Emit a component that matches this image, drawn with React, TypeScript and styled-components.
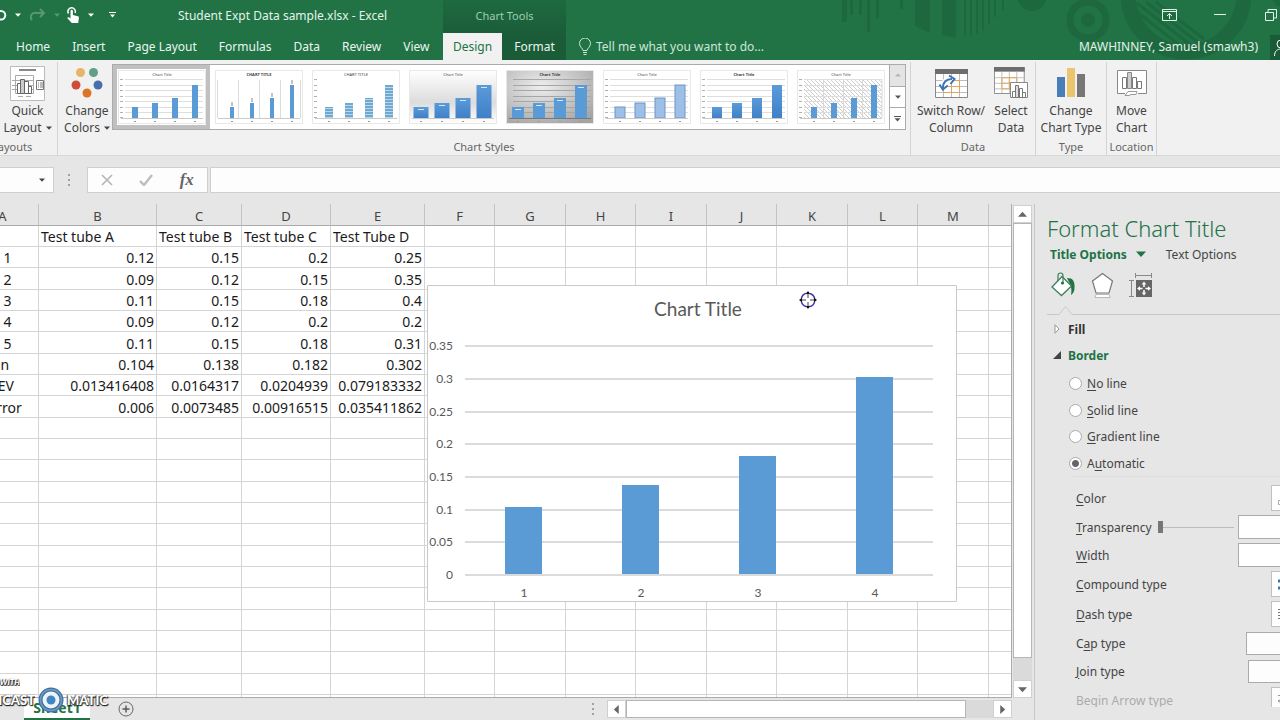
import React from "react";
import styled, { createGlobalStyle, css } from "styled-components";

const ui = `"Noto Sans", "Open Sans", "Liberation Sans", sans-serif`;
const sheetFont = `"Noto Sans", Lato, "Liberation Sans", sans-serif`;
const green = "#217346";
const darkGreen = "#1a5c38";
const artGreen = "#1d683e";

const Global = createGlobalStyle`
  * { box-sizing: border-box; }
  body { margin: 0; overflow: hidden; background: #e6e6e6; font-family: ${ui}; font-size: 12px; color: #444; }
  button, input, select { font: inherit; color: inherit; margin: 0; }
  button { border: 0; padding: 0; background: none; }
  u { text-underline-offset: 2px; }
  svg { display: block; flex: none; }
`;

const Window = styled.div`
  display: flex;
  flex-direction: column;
  height: 100vh;
  overflow: hidden;
`;

/* Title bar and tabs */
const Header = styled.header`
  position: relative;
  display: flex;
  flex: none;
  background: ${green};
  color: #e4f3ea;
  white-space: nowrap;
  overflow: hidden;
`;
const HeaderArt = styled.svg`
  position: absolute;
  top: 0;
  right: 0;
`;
const HeaderPart = styled.div<{ $width?: number; $dark?: boolean }>`
  position: relative;
  display: flex;
  flex-direction: column;
  ${(p) => (p.$width ? css`flex: none; width: ${p.$width}px;` : css`flex: 1; min-width: 0;`)}
  ${(p) => p.$dark && css`background: linear-gradient(#1e6a40, ${darkGreen} 60%);`}
`;
const TitleRow = styled.div<{ $end?: boolean; $center?: boolean }>`
  display: flex;
  align-items: center;
  height: 33px;
  padding-bottom: 3px;
  justify-content: ${(p) => (p.$end ? "flex-end" : p.$center ? "center" : "flex-start")};
  margin-right: ${(p) => (p.$end ? -7 : 0)}px;
`;
const QuickAccess = styled.div`
  display: flex;
  align-items: center;
  width: 178px;
  height: 30px;
`;
const QuickButton = styled.button<{ $width: number; $faded?: boolean }>`
  display: flex;
  justify-content: center;
  flex: none;
  width: ${(p) => p.$width}px;
  overflow: hidden;
  color: #fff;
  opacity: ${(p) => (p.$faded ? 0.25 : 1)};
`;
const DocTitle = styled.span`
  font-size: 12px;
`;
const ContextLabel = styled.span`
  font-size: 11px;
  color: #9dceb1;
`;
const TabRow = styled.div<{ $gap?: number; $pad?: number }>`
  display: flex;
  align-items: stretch;
  height: 27px;
  gap: ${(p) => p.$gap ?? 0}px;
  padding-left: ${(p) => p.$pad ?? 0}px;
`;
const Tab = styled.button<{ $active?: boolean; $pad?: number }>`
  padding: 0 ${(p) => p.$pad ?? 0}px;
  font-size: 12px;
  color: ${(p) => (p.$active ? green : "#e9f6ee")};
  background: ${(p) => (p.$active ? "#f1f1f1" : "transparent")};
`;
const TellMe = styled.button`
  display: flex;
  align-items: center;
  gap: 5px;
  color: #cde6d7;
`;
const Account = styled.span`
  display: flex;
  align-items: center;
  margin-left: auto;
`;
const ShareButton = styled.button`
  display: flex;
  align-items: center;
  flex: none;
  width: 10px;
  height: 25px;
  margin: 2px 0 0 12px;
  padding-left: 4px;
  overflow: hidden;
  color: #fff;
  background: #185c37;
`;
const WindowButton = styled.button<{ $width: number }>`
  display: flex;
  align-items: center;
  flex: none;
  justify-content: center;
  width: ${(p) => p.$width}px;
  height: 28px;
  color: #e4f3ea;
`;

/* Ribbon */
const Ribbon = styled.section`
  display: flex;
  flex: none;
  height: 96px;
  padding-top: 2px;
  background: #f1f1f1;
  border-bottom: 1px solid #d8d8d8;
  overflow: hidden;
`;
const Group = styled.div<{ $width?: number; $shift?: number }>`
  display: flex;
  flex-direction: column;
  justify-content: space-between;
  flex: none;
  height: 93px;
  ${(p) => p.$width && css`width: ${p.$width}px;`}
  margin-left: ${(p) => p.$shift ?? 0}px;
  border-right: 1px solid #d4d4d4;
`;
const GroupItems = styled.div`
  display: flex;
  justify-content: center;
  padding-top: 2px;
`;
const GroupLabel = styled.div`
  font-size: 11px;
  line-height: 16px;
  text-align: center;
  color: #666;
  white-space: nowrap;
`;
const BigButton = styled.button<{ $width: number }>`
  display: flex;
  flex-direction: column;
  align-items: center;
  flex: none;
  width: ${(p) => p.$width}px;
  white-space: nowrap;
  font-size: 12px;
  line-height: 17px;
`;
const IconBox = styled.span`
  display: flex;
  align-items: center;
  justify-content: center;
  height: 38px;
`;
const WithArrow = styled.span`
  display: flex;
  align-items: center;
  gap: 4px;
`;
const Gallery = styled.div`
  display: flex;
  height: 66px;
  border: 1px solid #ababab;
  background: #fff;
`;
const StyleButton = styled.button<{ $selected?: boolean }>`
  flex: none;
  width: 97px;
  height: 64px;
  border: 4px solid ${(p) => (p.$selected ? "#c0c0c0" : "transparent")};
  display: flex;
  align-items: center;
  justify-content: center;
`;
const GallerySteps = styled.div`
  display: flex;
  flex-direction: column;
  width: 16px;
  border-left: 1px solid #ababab;
`;
const GalleryStep = styled.button<{ $off?: boolean }>`
  display: flex;
  align-items: center;
  justify-content: center;
  flex: 1;
  color: ${(p) => (p.$off ? "#b5b5b5" : "#555")};
  background: ${(p) => (p.$off ? "#e4e4e4" : "#fff")};
  & + & { border-top: 1px solid #ababab; }
`;

/* Formula bar */
const FormulaBar = styled.section`
  display: flex;
  flex: none;
  align-items: center;
  height: 48px;
`;
const NameBox = styled.div`
  display: flex;
  align-items: center;
  width: 54px;
  height: 26px;
  border: 1px solid #cfcfcf;
  border-left: 0;
  background: #fdfdfd;
`;
const NameInput = styled.input`
  width: 39px;
  border: 0;
  background: transparent;
`;
const Grip = styled.span<{ $margin: string }>`
  display: flex;
  flex-direction: column;
  gap: 3px;
  flex: none;
  margin: ${(p) => p.$margin};
  i { width: 2px; height: 2px; background: #a0a0a0; }
`;
const FormulaTools = styled.div`
  display: flex;
  align-items: center;
  justify-content: space-around;
  width: 121px;
  height: 26px;
  border: 1px solid #cfcfcf;
  background: #fdfdfd;
`;
const FormulaInput = styled.input`
  flex: 1;
  min-width: 0;
  height: 26px;
  margin-left: 2px;
  border: 1px solid #cfcfcf;
  border-right: 0;
  background: #fdfdfd;
`;
const Fx = styled.span`
  font: italic 700 17px "Liberation Serif", serif;
  color: #666;
`;

/* Worksheet */
const Body = styled.main`
  display: flex;
  flex: 1;
  min-height: 0;
`;
const Workbook = styled.section`
  display: flex;
  flex-direction: column;
  flex: 1;
  min-width: 0;
`;
const SheetRow = styled.div`
  display: flex;
  flex: 1;
  min-height: 0;
`;
const SheetView = styled.div`
  position: relative;
  flex: 1;
  min-width: 0;
  overflow: hidden;
  border-right: 1px solid #ababab;
  border-bottom: 1px solid #ababab;
  background: #fff;
`;
const Grid = styled.table`
  table-layout: fixed;
  width: calc(100% + 33px);
  margin-left: -33px;
  border-collapse: separate;
  border-spacing: 0;
  font-family: ${sheetFont};
  font-size: 14px;
  line-height: 18px;
  color: #1a1a1a;
  th, td { padding: 2px 2px 0; white-space: nowrap; border-right: 1px solid #d4d4d4; border-bottom: 1px solid #d4d4d4; }
  th { height: 22px; font-size: 13px; font-weight: 400; color: #444; background: #e6e6e6; border-right-color: #c3c3c3; border-bottom-color: #ababab; }
  td { height: 21px; }
  tr:nth-child(3n) td { height: 22px; }
  td:first-child { padding-left: 5px; }
  th:last-child, td:last-child { border-right: 0; }
`;
const Cell = styled.td<{ $right?: boolean }>`
  text-align: ${(p) => (p.$right ? "right" : "left")};
`;
const ChartFrame = styled.svg`
  position: absolute;
  left: 427px;
  top: 81px;
`;
const MoveCursor = styled.svg`
  position: absolute;
  left: 799px;
  top: 87px;
`;
const ScrollButton = styled.button`
  display: flex;
  align-items: center;
  justify-content: center;
  flex: none;
  width: 19px;
  height: 18px;
  color: #666;
  background: #fff;
  border: 1px solid #d0d0d0;
`;
const VScroll = styled.div`
  display: flex;
  flex-direction: column;
  flex: none;
  width: 19px;
  margin: 1px 2px 0 1px;
  background: #dadada;
`;
const VThumb = styled.div`
  flex: 1;
  margin-bottom: 22px;
  background: #fff;
  border: 1px solid #b5b5b5;
`;
const BottomBar = styled.div`
  position: relative;
  display: flex;
  align-items: center;
  flex: none;
  height: 22px;
`;
const SheetTab = styled.button`
  align-self: stretch;
  width: 66px;
  margin-left: 24px;
  font-size: 14px;
  line-height: 18px;
  font-weight: 700;
  color: ${green};
  background: #fff;
  border-bottom: 2px solid ${green};
`;
const AddSheet = styled.button`
  margin-left: 28px;
`;
const HScroll = styled.div`
  display: flex;
  flex: none;
  width: 405px;
  height: 18px;
  margin-right: 22px;
  background: #dadada;
`;
const HThumb = styled.div`
  width: 340px;
  margin-right: auto;
  background: #fff;
  border: 1px solid #b5b5b5;
`;
const Watermark = styled.div`
  position: absolute;
  left: 0;
  bottom: 7px;
  font-family: Lato, sans-serif;
  font-weight: 900;
  color: #fff;
  text-shadow: 1px 1px 1px #222, -1px 0 1px #555, 0 1px 1px #333;
  pointer-events: none;
`;
const WatermarkTop = styled.div`
  display: flex;
  justify-content: flex-end;
  width: 20px;
  overflow: hidden;
  font-size: 8px;
  line-height: 8px;
  font-style: italic;
  white-space: nowrap;
`;
const WatermarkName = styled.div`
  display: flex;
  align-items: center;
  gap: 3px;
  height: 27px;
  font-size: 13px;
  line-height: 14px;
`;
const WatermarkCut = styled.span`
  display: flex;
  justify-content: flex-end;
  width: 35px;
  overflow: hidden;
`;

/* Format pane */
const Pane = styled.aside`
  flex: none;
  width: 246px;
  padding-bottom: 13px;
  overflow: hidden;
  border-left: 1px solid #c6c6c6;
`;
const PaneInner = styled.div`
  width: 286px;
  height: 100%;
  padding-left: 12px;
  overflow: hidden;
`;
const PaneTitle = styled.h2`
  margin: 0;
  padding-top: 9px;
  font-size: 22px;
  line-height: 30px;
  font-weight: 300;
  color: ${green};
`;
const PaneTabs = styled.div`
  display: flex;
  align-items: center;
  height: 22px;
  padding-left: 3px;
`;
const PaneTab = styled.button<{ $active?: boolean }>`
  display: flex;
  align-items: center;
  gap: 9px;
  margin-right: 20px;
  font-size: 12px;
  font-weight: ${(p) => (p.$active ? 700 : 400)};
  color: ${(p) => (p.$active ? green : "#444")};
`;
const PaneIcons = styled.div`
  display: flex;
  align-items: center;
  gap: 14px;
  height: 40px;
  padding-left: 4px;
`;
const PaneRule = styled.svg`
  margin-bottom: 1px;
`;
const SectionButton = styled.button<{ $open?: boolean }>`
  display: flex;
  align-items: center;
  gap: 6px;
  height: 26px;
  padding-left: 5px;
  font-weight: 700;
  color: ${(p) => (p.$open ? green : "#333")};
`;
const Radios = styled.div`
  display: flex;
  flex-direction: column;
  margin-top: 2px;
  padding-left: 22px;
`;
const RadioLabel = styled.label`
  display: flex;
  align-items: center;
  gap: 5px;
  height: 27px;
  &:nth-child(2n) { height: 26px; }
`;
const Radio = styled.input`
  appearance: none;
  width: 13px;
  height: 13px;
  border: 1px solid #ababab;
  border-radius: 50%;
  background: #fff;
  &:checked { background: radial-gradient(circle, #666 0 3px, #fff 4px); }
`;
const Fields = styled.div`
  display: flex;
  flex-direction: column;
  gap: 4px;
  margin-left: 26px;
  padding-top: 8px;
  border-top: 1px solid #dedede;
`;
const Field = styled.div<{ $tall?: boolean; $off?: boolean }>`
  display: flex;
  flex: none;
  align-items: center;
  justify-content: space-between;
  height: ${(p) => (p.$tall ? 26 : 24)}px;
  padding-left: 3px;
  ${(p) => p.$off && css`color: #ababab;`}
`;
const Swatch = styled.button`
  display: flex;
  align-items: center;
  width: 50px;
  height: 26px;
  padding-left: 6px;
  background: #fff;
  border: 1px solid #c0c0c0;
`;
const Entry = styled.input`
  width: 83px;
  height: 24px;
  background: #fff;
  border: 1px solid #ababab;
`;
const Picker = styled.select<{ $width: number }>`
  width: ${(p) => p.$width}px;
  height: 23px;
  background: #fdfdfd;
  border: 1px solid #ababab;
  border-radius: 0;
  appearance: none;
`;
const Slider = styled.input`
  appearance: none;
  width: 76px;
  height: 12px;
  margin: 0 auto 0 6px;
  background: linear-gradient(#bcbcbc, #bcbcbc) center / 100% 1px no-repeat;
  &::-webkit-slider-thumb { appearance: none; width: 5px; height: 12px; background: #777; }
`;

const Arrow = ({ dir = "down", size = 6 }: { dir?: string; size?: number }) => {
  const turn = { down: 0, left: 90, up: 180, right: 270 }[dir] ?? 0;
  return (
    <svg width={size} height={size} viewBox="0 0 6 6" aria-hidden>
      <path d="M0 1.5h6L3 4.8z" fill="currentColor" transform={`rotate(${turn} 3 3)`} />
    </svg>
  );
};

const GridTable = () => (
  <>
    <path d="M.5.5h32v28h-32z" fill="#fff" stroke="#888" />
    <path d="M0 0h33v5H0z" fill="#6d6d6d" />
    <path d="M8.500 5v23M16.500 5v23M24.500 5v23M1 11.500h31M1 17.500h31M1 23.500h31" stroke="#bdbdbd" />
    <path d="M8.500 11.500h16v12h-16zM16.500 11.500v12M8.500 17.500h16" fill="none" stroke="#e5a35a" />
  </>
);

const SwitchIcon = () => (
  <svg width="33" height="29" viewBox="0 0 33 29">
    <GridTable />
    <path d="M8 19c0-6 3-9 9-9" fill="none" stroke="#fff" strokeWidth="5" />
    <path d="M8 19c0-6 3-9 9-9" fill="none" stroke="#3f74b3" strokeWidth="2" />
    <path d="M14 6.500l5.500 3.500-4 5M4.500 15.500l3.300 5 5-4" fill="none" stroke="#3f74b3" strokeWidth="2" />
  </svg>
);
const SelectIcon = () => (
  <svg width="34" height="32" viewBox="0 0 34 32">
    <g transform="scale(.93)"><GridTable /></g>
    <path d="M16.500 15.500h17v15h-17z" fill="#fff" stroke="#888" />
    <path d="M18.500 24.500h3v6h-3zM25.500 21.500h3v9h-3zM28.500 25.500h3v5h-3z" fill="#fff" stroke="#777" />
    <path d="M21.500 18.500h3v12h-3z" fill="#ddd" stroke="#777" />
  </svg>
);
const TypeIcon = () => (
  <svg width="28" height="30" viewBox="0 0 28 30">
    <path d="M0 9h8v20H0z" fill="#4a7ebb" />
    <path d="M10 0h8v29h-8z" fill="#ebc46e" />
    <path d="M20 6h8v23h-8z" fill="#777" />
  </svg>
);
const MoveIcon = () => (
  <svg width="30" height="28" viewBox="0 0 30 28">
    <path d="M8 24.500H.5V1.500h29v23H21" fill="#fff" stroke="#888" />
    <path d="M5.500 8.500h4v11h-4zM15.500 8.500h4v11h-4zM20.500 12.500h4v7h-4z" fill="#fff" stroke="#777" />
    <path d="M10.500 3.500h4v16h-4z" fill="#ccc" stroke="#888" />
    <path d="M8 26.500l3-4h9l-1 3h-5l-2 1z" fill="#fff" stroke="#999" />
  </svg>
);
const LayoutIcon = () => (
  <svg width="35" height="35" viewBox="0 0 35 35">
    <path d="M.5.5h34v34H.5z" fill="#fff" stroke="#bbb" />
    <path d="M9 4h17" stroke="#888" strokeWidth="2" />
    <path d="M5.500 9.500h18v18h-18zM2 14.500h21M2 19.500h21M2 23.500h21M8 30.500h5M16 30.500h5" fill="none" stroke="#aaa" />
    <path d="M7.500 17.500h3v10h-3zM14.500 15.500h4v12h-4zM18.500 20.500h3v7h-3z" fill="#fff" stroke="#666" />
    <path d="M10.500 13.500h4v14h-4z" fill="#ccc" stroke="#666" />
    <path d="M26.500 14.500h7v9h-7zM28 17h1M30 17h3M28 19h1M30 19h3M28 21h1M30 21h3" fill="none" stroke="#777" />
  </svg>
);
const ColorsIcon = () => (
  <svg width="32" height="30" viewBox="0 0 32 30">
    <circle cx="9.500" cy="4.500" r="4.500" fill="#e8b468" />
    <circle cx="22.500" cy="4.500" r="4.500" fill="#629f84" />
    <circle cx="5" cy="17" r="4.500" fill="#cf4d36" />
    <circle cx="27" cy="17" r="4.500" fill="#4770ab" />
    <circle cx="16" cy="25" r="4.500" fill="#dc7426" />
  </svg>
);

type Look = {
  title: string; bold?: boolean; bar: string; w: number; back?: string; lines?: "h" | "v" | "none"; line?: string;
  axis?: boolean; stroke?: string; values?: boolean; selected?: boolean; hatch?: boolean;
};
const looks: Look[] = [
  { title: "Chart Title", bar: "#5b9bd5", w: 6, lines: "h", axis: true, selected: true },
  { title: "CHART TITLE", bold: true, bar: "#5b9bd5", w: 4, lines: "v" },
  { title: "CHART TITLE", bar: "url(#stripes)", w: 8, axis: true, lines: "none" },
  { title: "Chart Title", bar: "url(#blueFade)", w: 15, back: "url(#softGrey)", lines: "none", values: true },
  { title: "Chart Title", bold: true, bar: "#5b9bd5", w: 12, back: "url(#deepGrey)", lines: "h", line: "#a6a6a6", values: true },
  { title: "Chart Title", bar: "#9dbfe8", w: 10, lines: "h", axis: true, stroke: "#6f96c6" },
  { title: "Chart Title", bold: true, bar: "url(#blueFade)", w: 10, lines: "h", axis: true },
  { title: "Chart Title", bar: "#5b9bd5", w: 6, lines: "h", axis: true, hatch: true },
];
const tops = [37, 33, 28, 15];

const Thumb = ({ look }: { look: Look }) => (
  <svg width="88" height="54" viewBox="0 0 88 54">
    <path d="M.5.5h87v53H.5z" fill={look.back ?? "#fff"} stroke="#e8e8e8" />
    <text x="44" y="6" fontSize="4" fontWeight={look.bold ? 700 : 400} textAnchor="middle" fill="#444">{look.title}</text>
    {look.hatch && <path d="M7 9h78v39H7z" fill="url(#hatch)" />}
    {look.hatch && <path d="M26.500 9v39M46.500 9v39M65.500 9v39M85 9v39" stroke="#d8d8d8" />}
    {look.lines === "h" && <path d="M7 9.500h78M7 15.500h78M7 20.500h78M7 26.500h78M7 31.500h78M7 37.500h78M7 42.500h78" stroke={look.line ?? "#dedede"} />}
    {look.lines === "v" && <path d="M2.500 10v38M23.500 10v38M44.500 10v38M65.500 10v38M85.500 10v38" stroke="#dcdcdc" />}
    {look.axis && [10, 16, 21, 27, 32, 38, 43, 48].map((y) => <path key={y} d={`M2 ${y - 0.5}h3`} stroke="#b0b0b0" />)}
    {tops.map((y, i) => {
      const center = look.w > 10 ? 12 + i * 21 : 17 + i * 20;
      return (
        <g key={y}>
          <rect x={center - look.w / 2} y={y} width={look.w} height={48 - y} fill={look.bar} stroke={look.stroke} />
          {look.values && <path d={`M${center - 3} ${y + 2.5}h6`} stroke="#d6e6f5" />}
          {look.lines === "v" && <path d={`M${center} ${y - 5}v4`} stroke="#888" />}
          <path d={`M${center - 1} 51.500h2`} stroke="#999" />
        </g>
      );
    })}
    <path d="M3 48.500h82" stroke={look.line ? "#777" : "#cacaca"} />
  </svg>
);

const Defs = styled.svg`
  position: absolute;
`;
const PatternDefs = () => (
  <Defs width="0" height="0" aria-hidden>
    <defs>
      <linearGradient id="blueFade" x1="0" y1="0" x2="0" y2="1"><stop stopColor="#5b9bd9" /><stop offset="1" stopColor="#3f80c8" /></linearGradient>
      <linearGradient id="softGrey" x1="0" y1="0" x2="0" y2="1"><stop stopColor="#fff" /><stop offset=".6" stopColor="#dcdcdc" /><stop offset="1" stopColor="#fff" /></linearGradient>
      <radialGradient id="deepGrey" cx=".4" cy=".3" r=".8"><stop stopColor="#eee" /><stop offset="1" stopColor="#a4a4a4" /></radialGradient>
      <pattern id="stripes" width="4" height="3" patternUnits="userSpaceOnUse"><path d="M0 0h4v3H0z" fill="#b9d6ea" /><path d="M0 0h4v2H0z" fill="#6fa8d0" /></pattern>
      <pattern id="hatch" width="4" height="4" patternUnits="userSpaceOnUse"><path d="M0 0l4 4" stroke="#c2c2c2" strokeWidth=".8" /></pattern>
    </defs>
  </Defs>
);

const columns: [string, number | undefined][] = [
  ["A", 72], ["B", 118], ["C", 85], ["D", 89], ["E", 94], ["F", 70], ["G", 71], ["H", 70],
  ["I", 71], ["J", 70], ["K", 71], ["L", 70], ["M", 71], ["", undefined],
];
const data = [
  ["", "Test tube A", "Test tube B", "Test tube C", "Test Tube D"],
  ["Trial 1", "0.12", "0.15", "0.2", "0.25"],
  ["Trial 2", "0.09", "0.12", "0.15", "0.35"],
  ["Trial 3", "0.11", "0.15", "0.18", "0.4"],
  ["Trial 4", "0.09", "0.12", "0.2", "0.2"],
  ["Trial 5", "0.11", "0.15", "0.18", "0.31"],
  ["Mean", "0.104", "0.138", "0.182", "0.302"],
  ["STDEV", "0.013416408", "0.0164317", "0.0204939", "0.079183332"],
  ["St Error", "0.006", "0.0073485", "0.00916515", "0.035411862"],
];
const rows = Array.from({ length: 23 }, (_, i) => data[i] ?? []);

const Chart = () => {
  const zero = 290;
  const perUnit = 654;
  return (
    <ChartFrame width="530" height="317" viewBox="0 0 530 317" fontFamily="Lato, sans-serif" fill="#595959" role="img" aria-label="Chart Title">
      <path d="M.5.5h529v316H.5z" fill="#fff" stroke="#c9c9c9" />
      <text x="271" y="31" fontSize="19" textAnchor="middle">Chart Title</text>
      {[0, 0.05, 0.1, 0.15, 0.2, 0.25, 0.3, 0.35].map((v) => {
        const y = Math.round(zero - v * perUnit);
        return (
          <g key={v}>
            <path d={`M38 ${y}h468`} stroke="#cfcfcf" strokeWidth="1.500" />
            <text x="26" y={y + 4} fontSize="12" textAnchor="end">{v}</text>
          </g>
        );
      })}
      {[0.104, 0.138, 0.182, 0.302].map((v, i) => (
        <g key={v}>
          <rect x={78 + i * 117} y={Math.round(zero - v * perUnit)} width="37" height={Math.round(v * perUnit) - 1} fill="#5b9bd5" />
          <text x={97 + i * 117} y="312" fontSize="12" textAnchor="middle">{i + 1}</text>
        </g>
      ))}
    </ChartFrame>
  );
};

const RibbonButton = ({ width, icon, lines, arrow }: { width: number; icon: React.ReactNode; lines: string[]; arrow?: boolean }) => (
  <BigButton $width={width}>
    <IconBox>{icon}</IconBox>
    <span>{lines[0]}</span>
    <WithArrow>{lines[1]}{arrow && <Arrow />}</WithArrow>
  </BigButton>
);

export default function App() {
  return (
    <Window>
      <Global />
      <PatternDefs />
      <Header>
        <HeaderArt width="450" height="60" viewBox="830 0 450 60" fill={artGreen} stroke="none" aria-hidden>
          <path d="M842 0h5v22h-5zM850 0h3v15h-3zM859 0h3v15h-3zM867 0h3v32h-3zM876 0h3v18h-3zM900 0h3v9h-3zM915 0h15v33l-15-7zM942 0h14v38l-14-3z" />
          <path d="M964 0h2v36h-2zM970 0h2v36h-2zM976 0h2v34h-2zM982 0h2v31h-2zM988 0h2v24h-2zM994 0h2v17h-2zM1002 0h2v10h-2z" />
          <circle cx="1032" cy="-4" r="15" />
          <circle cx="1088" cy="20" r="18" fill="none" stroke={artGreen} strokeWidth="7" />
          <circle cx="1088" cy="20" r="7" />
          <circle cx="1186" cy="-6" r="58" fill="none" stroke={artGreen} strokeWidth="15" />
          <path d="M1132 8l46 36M1137 3l56 44M1146 2l54 42M1156 2l48 37" stroke={artGreen} strokeWidth="3" />
          <circle cx="1284" cy="-4" r="12" />
        </HeaderArt>
        <HeaderPart $width={443}>
          <TitleRow>
            <QuickAccess>
              <QuickButton $width={10} aria-label="Undo">
                <svg width="10" height="14" viewBox="0 0 10 14"><path d="M0 3h1a4.300 4.300 0 010 8.600H0" fill="none" stroke="currentColor" strokeWidth="2" /></svg>
              </QuickButton>
              <QuickButton $width={16} aria-label="Undo list"><Arrow /></QuickButton>
              <QuickButton $width={24} $faded aria-label="Redo">
                <svg width="16" height="14" viewBox="0 0 16 14"><path d="M10 1l4 4-4 4M14 5H6a4.200 4.200 0 00-4 7" fill="none" stroke="currentColor" strokeWidth="2" /></svg>
              </QuickButton>
              <QuickButton $width={13} $faded aria-label="Redo list"><Arrow /></QuickButton>
              <QuickButton $width={20} aria-label="Touch mode">
                <svg width="14" height="17" viewBox="0 0 14 17">
                  <path d="M2.500 6.500a3.700 3.700 0 116.500-.5" fill="none" stroke="currentColor" strokeWidth="1.500" />
                  <path d="M4.500 4a1.200 1.200 0 012.400 0v4l5 1.200c.9.300 1.100.8 1 1.600L12.200 16H5.800L1.200 11c.6-1 1.700-.8 3.300.5z" fill="currentColor" />
                </svg>
              </QuickButton>
              <QuickButton $width={16} aria-label="Mode list"><Arrow /></QuickButton>
              <QuickButton $width={26} aria-label="Customize">
                <svg width="7" height="6" viewBox="0 0 7 6"><path d="M0 0h7v1H0zM1 2.500h5L3.500 5.500z" fill="currentColor" /></svg>
              </QuickButton>
            </QuickAccess>
            <DocTitle>Student Expt Data sample.xlsx - Excel</DocTitle>
          </TitleRow>
          <TabRow $gap={22} $pad={16}>
            {["Home", "Insert", "Page Layout", "Formulas", "Data", "Review", "View"].map((t) => <Tab key={t}>{t}</Tab>)}
          </TabRow>
        </HeaderPart>
        <HeaderPart $width={123} $dark>
          <TitleRow $center><ContextLabel>Chart Tools</ContextLabel></TitleRow>
          <TabRow>
            <Tab $active $pad={10}>Design</Tab>
            <Tab $pad={12}>Format</Tab>
          </TabRow>
        </HeaderPart>
        <HeaderPart>
          <TitleRow $end>
            <WindowButton $width={32} aria-label="Ribbon display options">
              <svg width="15" height="12" viewBox="0 0 15 12"><path d="M.5.5h14v11H.5zM.5 2.500h14M7.500 10V4.500M5 7l2.500-2.500L10 7" fill="none" stroke="currentColor" /></svg>
            </WindowButton>
            <WindowButton $width={70} aria-label="Minimize">
              <svg width="12" height="2" viewBox="0 0 12 2"><path d="M0 .5h12" stroke="currentColor" /></svg>
            </WindowButton>
            <WindowButton $width={32} aria-label="Restore">
              <svg width="12" height="12" viewBox="0 0 12 12"><path d="M.5 3.500h8v8h-8zM3 3V.5h8.500V9H9" fill="none" stroke="currentColor" /></svg>
            </WindowButton>
          </TitleRow>
          <TabRow $pad={13}>
            <TellMe>
              <svg width="12" height="17" viewBox="0 0 12 17"><path d="M4 12.500c0-2-3.500-3.500-3.500-7a5.300 5.300 0 0111 0c0 3.500-3.500 5-3.500 7zM4 14.500h4M4.500 16.500h3" fill="none" stroke="currentColor" /></svg>
              Tell me what you want to do...
            </TellMe>
            <Account>MAWHINNEY, Samuel (smawh3)</Account>
            <ShareButton aria-label="Share">
              <svg width="14" height="17" viewBox="0 0 14 17"><circle cx="7" cy="5" r="4" fill="none" stroke="currentColor" /><path d="M.5 17c0-5 3-7 6.500-7s6.500 2 6.500 7" fill="none" stroke="currentColor" /></svg>
            </ShareButton>
          </TabRow>
        </HeaderPart>
      </Header>

      <Ribbon>
        <Group $width={122} $shift={-64}>
          <GroupItems>
            <RibbonButton width={62} icon={null} lines={["Add Chart", "Element"]} arrow />
            <RibbonButton width={58} icon={<LayoutIcon />} lines={["Quick", "Layout"]} arrow />
          </GroupItems>
          <GroupLabel>Chart Layouts</GroupLabel>
        </Group>
        <Group $width={853}>
          <GroupItems>
            <RibbonButton width={50} icon={<ColorsIcon />} lines={["Change", "Colors"]} arrow />
            <Gallery>
              {looks.map((look, i) => (
                <StyleButton key={i} $selected={look.selected} aria-label={`Style ${i + 1}`}><Thumb look={look} /></StyleButton>
              ))}
              <GallerySteps>
                <GalleryStep $off aria-label="Previous styles"><Arrow dir="up" /></GalleryStep>
                <GalleryStep aria-label="Next styles"><Arrow /></GalleryStep>
                <GalleryStep aria-label="More styles">
                  <svg width="7" height="6" viewBox="0 0 7 6"><path d="M0 0h7v1H0zM.5 2.200h6L3.500 5.500z" fill="currentColor" /></svg>
                </GalleryStep>
              </GallerySteps>
            </Gallery>
          </GroupItems>
          <GroupLabel>Chart Styles</GroupLabel>
        </Group>
        <Group $width={125}>
          <GroupItems>
            <RibbonButton width={76} icon={<SwitchIcon />} lines={["Switch Row/", "Column"]} />
            <RibbonButton width={44} icon={<SelectIcon />} lines={["Select", "Data"]} />
          </GroupItems>
          <GroupLabel>Data</GroupLabel>
        </Group>
        <Group $width={71}>
          <GroupItems><RibbonButton width={68} icon={<TypeIcon />} lines={["Change", "Chart Type"]} /></GroupItems>
          <GroupLabel>Type</GroupLabel>
        </Group>
        <Group $width={50}>
          <GroupItems><RibbonButton width={48} icon={<MoveIcon />} lines={["Move", "Chart"]} /></GroupItems>
          <GroupLabel>Location</GroupLabel>
        </Group>
      </Ribbon>

      <FormulaBar>
        <NameBox>
          <NameInput aria-label="Name box" />
          <button aria-label="Name list"><Arrow /></button>
        </NameBox>
        <Grip $margin="0 17px 0 14px"><i /><i /><i /></Grip>
        <FormulaTools>
          <button aria-label="Cancel"><svg width="12" height="12" viewBox="0 0 12 12"><path d="M1 1l10 10M11 1L1 11" stroke="#b5b5b5" strokeWidth="1.600" /></svg></button>
          <button aria-label="Enter"><svg width="14" height="12" viewBox="0 0 14 12"><path d="M1 7l4 4 8-10" fill="none" stroke="#bdbdbd" strokeWidth="2.400" /></svg></button>
          <button aria-label="Insert function"><Fx>fx</Fx></button>
        </FormulaTools>
        <FormulaInput aria-label="Formula" />
      </FormulaBar>

      <Body>
        <Workbook>
          <SheetRow>
            <SheetView>
              <Grid>
                <colgroup>{columns.map(([name, width]) => <col key={name} width={width} />)}</colgroup>
                <thead><tr>{columns.map(([name]) => <th key={name}>{name}</th>)}</tr></thead>
                <tbody>
                  {rows.map((row, r) => (
                    <tr key={r}>
                      {columns.map(([name], c) => <Cell key={name} $right={r > 0 && c > 0}>{row[c]}</Cell>)}
                    </tr>
                  ))}
                </tbody>
              </Grid>
              <Chart />
              <MoveCursor width="18" height="18" viewBox="0 0 18 18" aria-hidden>
                <circle cx="9" cy="9" r="6.800" fill="none" stroke="#4a3fb0" strokeWidth="1.600" strokeDasharray="7.500 3.180" strokeDashoffset="-1.600" />
                <path d="M9 0l2.200 3H6.800zM9 18l2.200-3H6.800zM0 9l3-2.200v4.400zM18 9l-3-2.200v4.400z" fill="#111" />
                <path d="M9 3v4M9 11v4M3 9h4M11 9h4" stroke="#444" />
              </MoveCursor>
            </SheetView>
            <VScroll>
              <ScrollButton aria-label="Scroll up"><Arrow dir="up" size={9} /></ScrollButton>
              <VThumb />
              <ScrollButton aria-label="Scroll down"><Arrow size={9} /></ScrollButton>
            </VScroll>
          </SheetRow>
          <BottomBar>
            <SheetTab>Sheet1</SheetTab>
            <AddSheet aria-label="New sheet">
              <svg width="16" height="16" viewBox="0 0 16 16"><circle cx="8" cy="8" r="7" fill="none" stroke="#666" /><path d="M8 4.500v7M4.500 8h7" stroke="#555" strokeWidth="1.400" /></svg>
            </AddSheet>
            <Grip $margin="0 13px 0 auto"><i /><i /><i /></Grip>
            <HScroll>
              <ScrollButton aria-label="Scroll left"><Arrow dir="left" size={9} /></ScrollButton>
              <HThumb />
              <ScrollButton aria-label="Scroll right"><Arrow dir="right" size={9} /></ScrollButton>
            </HScroll>
            <Watermark>
              <WatermarkTop>RECORDED WITH</WatermarkTop>
              <WatermarkName>
                <WatermarkCut>SCREENCAST</WatermarkCut>
                <svg width="26" height="26" viewBox="0 0 26 26">
                  <circle cx="13" cy="13" r="10.500" fill="#eef3f7" stroke="#3f6f9c" strokeWidth="4" />
                  <circle cx="13" cy="13" r="10.500" fill="none" stroke="#6c9bc4" strokeWidth="1.500" />
                  <circle cx="13" cy="13" r="4.500" fill="#3f86c6" />
                </svg>
                <span>MATIC</span>
              </WatermarkName>
            </Watermark>
          </BottomBar>
        </Workbook>

        <Pane>
          <PaneInner>
            <PaneTitle>Format Chart Title</PaneTitle>
            <PaneTabs>
              <PaneTab $active>Title Options<Arrow size={10} /></PaneTab>
              <PaneTab>Text Options</PaneTab>
            </PaneTabs>
            <PaneIcons>
              <button aria-label="Fill and line">
                <svg width="26" height="26" viewBox="0 0 26 26">
                  <path d="M16 6c6 0 8 3 7.500 10.500-.2 3-1.200 5-3.500 6.500.8-4 .5-8-1-11z" fill={green} />
                  <path d="M11 4.500l9.500 9.500-10 9.500L1 15z" fill="#fff" stroke="#3f7f5c" strokeWidth="1.300" />
                  <path d="M7 9V3.500a2.500 2.500 0 015 0V10" fill="none" stroke="#3f7f5c" strokeWidth="1.200" />
                  <circle cx="11.500" cy="11" r="1.600" fill={green} />
                </svg>
              </button>
              <button aria-label="Effects">
                <svg width="23" height="26" viewBox="0 0 23 26">
                  <path d="M11.500 1.500l10 7.500-3.500 12H5L1.500 9z" fill="#fff" stroke="#777" strokeWidth="1.200" />
                  <path d="M5 22.500h13l1 3H4z" fill="#fff" stroke="#aaa" strokeWidth=".8" />
                </svg>
              </button>
              <button aria-label="Size and properties">
                <svg width="24" height="26" viewBox="0 0 24 26">
                  <path d="M7.500 1v5M23.500 1v5M7.500 3.500h16M1 8.500h5M1 24.500h5M3.500 8.500v16" fill="none" stroke="#888" />
                  <path d="M8 8h16v17H8z" fill="#666" />
                  <path d="M16 9.500l2.300 3h-4.600zM16 23.500l2.300-3h-4.600zM9 16.500l3-2.300v4.600zM23 16.500l-3-2.300v4.600z" fill="#fff" />
                  <path d="M16 12v3M16 18v3M11.500 16.500h3M17.500 16.500h3" stroke="#fff" strokeWidth="1.500" />
                </svg>
              </button>
            </PaneIcons>
            <PaneRule width="274" height="10" viewBox="0 0 274 10" aria-hidden>
              <path d="M0 9.500h12l6.500-8 6.500 8h249" fill="none" stroke="#c9c9c9" />
            </PaneRule>
            <SectionButton>
              <svg width="10" height="10" viewBox="0 0 10 10"><path d="M3 .8l4 4.200-4 4.200z" fill="#fff" stroke="#999" /></svg>
              Fill
            </SectionButton>
            <SectionButton $open>
              <svg width="10" height="10" viewBox="0 0 10 10"><path d="M9 1v8H1z" fill="#444" /></svg>
              Border
            </SectionButton>
            <Radios>
              <RadioLabel><Radio type="radio" name="line" /><span><u>N</u>o line</span></RadioLabel>
              <RadioLabel><Radio type="radio" name="line" /><span><u>S</u>olid line</span></RadioLabel>
              <RadioLabel><Radio type="radio" name="line" /><span><u>G</u>radient line</span></RadioLabel>
              <RadioLabel><Radio type="radio" name="line" defaultChecked /><span>A<u>u</u>tomatic</span></RadioLabel>
            </Radios>
            <Fields>
              <Field $tall>
                <label htmlFor="color"><u>C</u>olor</label>
                <Swatch id="color"><svg width="14" height="14" viewBox="0 0 14 14"><path d="M.5 9.500h13v4H.5z" fill="#fff" stroke="#aaa" /></svg></Swatch>
              </Field>
              <Field>
                <label htmlFor="transparency"><u>T</u>ransparency</label>
                <Slider id="transparency" type="range" defaultValue={0} />
                <Entry aria-label="Transparency value" />
              </Field>
              <Field>
                <label htmlFor="width"><u>W</u>idth</label>
                <Entry id="width" />
              </Field>
              <Field $tall>
                <label htmlFor="compound"><u>C</u>ompound type</label>
                <Swatch id="compound"><svg width="18" height="12" viewBox="0 0 18 12"><path d="M0 3h18M0 10h18" stroke="#3f74b3" strokeWidth="3" /></svg></Swatch>
              </Field>
              <Field $tall>
                <label htmlFor="dash"><u>D</u>ash type</label>
                <Swatch id="dash"><svg width="18" height="12" viewBox="0 0 18 12"><path d="M0 1.500h18M0 4.500h18M0 7.500h18M0 10.500h18" stroke="#777" /></svg></Swatch>
              </Field>
              <Field>
                <label htmlFor="cap">C<u>a</u>p type</label>
                <Picker id="cap" $width={75} />
              </Field>
              <Field>
                <label htmlFor="join"><u>J</u>oin type</label>
                <Picker id="join" $width={73} />
              </Field>
              <Field $tall $off>
                <label htmlFor="begin"><u>B</u>egin Arrow type</label>
                <Swatch id="begin" disabled><svg width="16" height="14" viewBox="0 0 16 14"><path d="M0 2.500h14M5 5L0 8l5 3M0 8h14" fill="none" stroke="#999" /></svg></Swatch>
              </Field>
            </Fields>
          </PaneInner>
        </Pane>
      </Body>
    </Window>
  );
}
